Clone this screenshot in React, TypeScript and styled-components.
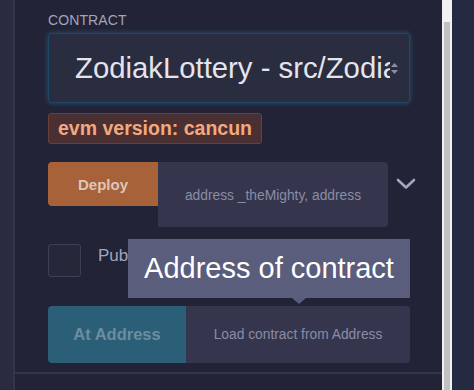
import React from "react";
import styled, { createGlobalStyle } from "styled-components";

const Global = createGlobalStyle`
  html, body { margin: 0; padding: 0; background: #222336; }
  body { font-family: "Liberation Sans", Arial, sans-serif; }
  * { box-sizing: border-box; }
`;

const Frame = styled.div`
  display: flex;
  width: 474px;
  height: 390px;
  overflow: hidden;
`;

const LeftStrip = styled.div`
  width: 15px;
  background: #2a2b40;
  border-right: 2px solid #34354b;
`;

const Panel = styled.div`
  position: relative;
  width: 427px;
  background: #222336;
  display: flex;
  flex-direction: column;
`;

const Content = styled.div`
  padding: 12px 0 0 33px;
  display: flex;
  flex-direction: column;
  height: 372px;
`;

const Label = styled.div`
  font-size: 14px;
  color: #a2a3bd;
  letter-spacing: 0.1px;
  line-height: 16px;
`;

const Select = styled.div`
  margin-top: 5px;
  width: 362px;
  height: 70px;
  background: #2a2c3f;
  border: 1px solid #1d4866;
  border-radius: 4px;
  box-shadow: 0 0 4px 1px rgba(40, 110, 150, 0.45);
  display: flex;
  align-items: center;
  padding-left: 26px;
  padding-right: 10px;
`;

const SelectText = styled.div`
  flex: 1;
  font-size: 29.3px;
  color: #e4e4ec;
  white-space: nowrap;
  overflow: hidden;
  line-height: 34px;
`;

const Spinner = styled.svg`
  flex: none;
`;

const Badge = styled.div`
  margin-top: 10px;
  align-self: flex-start;
  height: 31px;
  padding: 0 9px;
  background: #4a2f33;
  border: 1px solid #6b4035;
  border-radius: 3px;
  color: #f2a97c;
  font-weight: bold;
  font-size: 19.5px;
  line-height: 29px;
`;

const DeployRow = styled.div`
  margin-top: 18px;
  display: flex;
  align-items: flex-start;
`;

const ActionButton = styled.div<{ $bg: string; $color: string; $w: number; $h: number; $size: number }>`
  width: ${(p) => p.$w}px;
  height: ${(p) => p.$h}px;
  background: ${(p) => p.$bg};
  color: ${(p) => p.$color};
  font-size: ${(p) => p.$size}px;
  font-weight: bold;
  border-radius: 4px 0 0 4px;
  display: flex;
  align-items: center;
  justify-content: center;
`;

const ArgInput = styled.div<{ $w: number; $h: number }>`
  width: ${(p) => p.$w}px;
  height: ${(p) => p.$h}px;
  background: #35364d;
  border-radius: 0 4px 4px 0;
  color: #8a8ca6;
  font-size: 13.8px;
  display: flex;
  align-items: center;
  justify-content: center;
`;

const Chevron = styled.svg`
  margin-left: 8px;
  margin-top: 16px;
`;

const PublishRow = styled.div`
  margin-top: 17px;
  display: flex;
  align-items: flex-start;
`;

const Checkbox = styled.div`
  width: 33px;
  height: 33px;
  border: 1px solid #3e3f56;
  border-radius: 3px;
  background: #262739;
`;

const CheckLabel = styled.div`
  margin-left: 17px;
  margin-top: 2px;
  font-size: 17px;
  color: #a2a3bd;
`;

const AtRow = styled.div`
  margin-top: 29px;
  display: flex;
`;

const Tooltip = styled.div`
  position: absolute;
  left: 113px;
  top: 239px;
  width: 282px;
  height: 59px;
  background: #5b5d7c;
  color: #ffffff;
  font-size: 29px;
  display: flex;
  align-items: center;
  justify-content: center;
  &::after {
    content: "";
    position: absolute;
    left: 164px;
    top: 59px;
    border-left: 7px solid transparent;
    border-right: 7px solid transparent;
    border-top: 6px solid #5b5d7c;
  }
`;

const BottomLine = styled.div`
  height: 2px;
  background: #34354c;
`;

const Scrollbar = styled.div`
  width: 10px;
  background: #f1f1f1;
  padding: 22px 2px 0 2px;
`;

const Thumb = styled.div`
  height: 100%;
  background: #c1c1c1;
`;

const RightStrip = styled.div`
  flex: 1;
  background: #252a43;
`;

export default function App() {
  return (
    <>
      <Global />
      <Frame>
        <LeftStrip />
        <Panel>
          <Content>
            <Label>CONTRACT</Label>
            <Select>
              <SelectText>ZodiakLottery - src/ZodiakLottery.sol</SelectText>
              <Spinner width="9" height="16" viewBox="0 0 9 16">
                <path d="M4.5 3 L8 7 L1 7 Z" fill="#8c8ea6" />
                <path d="M4.5 14 L8 10 L1 10 Z" fill="#8c8ea6" />
              </Spinner>
            </Select>
            <Badge>evm version: cancun</Badge>
            <DeployRow>
              <ActionButton $bg="#a8623a" $color="#dcc6b8" $w={110} $h={44} $size={15}>
                Deploy
              </ActionButton>
              <ArgInput $w={230} $h={65}>
                <span style={{ marginTop: 2 }}>address _theMighty, address</span>
              </ArgInput>
              <Chevron width="20" height="12" viewBox="0 0 20 12">
                <path d="M2 2 L10 9.5 L18 2" stroke="#a4a6c0" strokeWidth="2.6" fill="none" strokeLinecap="round" strokeLinejoin="round" />
              </Chevron>
            </DeployRow>
            <PublishRow>
              <Checkbox />
              <CheckLabel>Publish to IPFS</CheckLabel>
            </PublishRow>
            <AtRow>
              <ActionButton $bg="#2a5f77" $color="#6b8d9e" $w={138} $h={57} $size={16.5}>
                At Address
              </ActionButton>
              <ArgInput $w={224} $h={57}>
                Load contract from Address
              </ArgInput>
            </AtRow>
          </Content>
          <BottomLine />
          <Tooltip>Address of contract</Tooltip>
        </Panel>
        <Scrollbar>
          <Thumb />
        </Scrollbar>
        <RightStrip />
      </Frame>
    </>
  );
}
